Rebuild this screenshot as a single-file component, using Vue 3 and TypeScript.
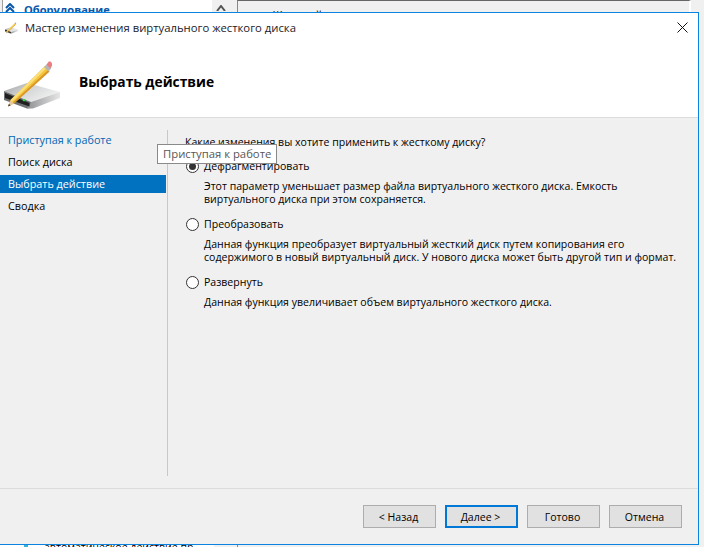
<script setup lang="ts">
interface Option {
  label: string;
  lines: string[];
  selected: boolean;
}

const steps: string[] = ['Приступая к работе', 'Поиск диска', 'Выбрать действие', 'Сводка'];
const activeStep = 2;

const options: Option[] = [
  {
    label: 'Дефрагментировать',
    lines: [
      'Этот параметр уменьшает размер файла виртуального жесткого диска. Емкость',
      'виртуального диска при этом сохраняется.',
    ],
    selected: true,
  },
  {
    label: 'Преобразовать',
    lines: [
      'Данная функция преобразует виртуальный жесткий диск путем копирования его',
      'содержимого в новый виртуальный диск. У нового диска может быть другой тип и формат.',
    ],
    selected: false,
  },
  {
    label: 'Развернуть',
    lines: ['Данная функция увеличивает объем виртуального жесткого диска.'],
    selected: false,
  },
];

const buttons: { label: string; primary: boolean }[] = [
  { label: '< Назад', primary: false },
  { label: 'Далее >', primary: true },
  { label: 'Готово', primary: false },
  { label: 'Отмена', primary: false },
];
</script>

<template>
  <div class="screen">
    <svg class="defs" width="0" height="0" aria-hidden="true">
      <defs>
        <linearGradient id="topFace" x1="0" y1="0" x2="1" y2="0.6">
          <stop offset="0" stop-color="#9b9d9f" />
          <stop offset="0.5" stop-color="#d6d7d8" />
          <stop offset="1" stop-color="#f2f2f2" />
        </linearGradient>
        <linearGradient id="sideFace" x1="0" y1="0" x2="1" y2="0">
          <stop offset="0" stop-color="#8f9091" />
          <stop offset="0.5" stop-color="#bcbdbe" />
          <stop offset="1" stop-color="#e6e6e6" />
        </linearGradient>
        <symbol id="diskPencil" viewBox="0 0 64 56">
          <polygon points="4,36 27,28 60,37 31,47" fill="url(#topFace)" />
          <polygon points="4,36 31,47 31,53 27,53.5 4,45" fill="#6f7071" />
          <polygon points="31,47 60,37 60,43 33,53.5 27,53.5" fill="url(#sideFace)" />
          <polygon points="5,38 29.5,48 29.5,51.5 5,43" fill="#1f1f1f" />
          <rect x="22.8" y="44" width="2.4" height="2.2" fill="#35d04a" />
          <polygon points="8,51.5 10.5,45 45,11 49.5,16.5 14,48.5" fill="#f5c33b" />
          <polygon points="10.5,45 45,11 46.8,13 12,47" fill="#fbdf78" />
          <polygon points="14,48.5 49.5,16.5 48.2,15 12.8,47.5" fill="#d9962a" />
          <polygon points="8,51.5 10,45.8 14,48.5" fill="#e9c9a0" />
          <polygon points="8,51.5 8.9,49 10.8,50.3" fill="#333333" />
          <polygon points="44,12 47.5,8.5 51.5,13 48.5,16.5" fill="#b6b6b6" />
          <polygon points="46.6,9.5 48.8,6.5 50.5,6.5 52,8.2 52,11 50,13.2" fill="#ec7d80" />
        </symbol>
      </defs>
    </svg>

    <div class="backdrop">
      <div class="strip-top">
        <div class="tree-head">
          <svg class="chevrons" viewBox="0 0 10 10" width="10" height="10">
            <path d="M1 5 5 1l4 4M1 9l4-4 4 4" fill="none" stroke="#0a56a8" stroke-width="2" />
          </svg>
          <span class="tree-title">Оборудование</span>
          <span class="tree-scroll">
            <svg viewBox="0 0 10 6" width="10" height="6"><path d="M1 6 5 1l4 5" fill="none" stroke="#555" stroke-width="2" /></svg>
          </span>
        </div>
        <div class="detail-head"><span class="detail-title">Жесткий</span></div>
      </div>
      <div class="strip-bottom">
        <div class="tree-foot">
          <span class="foot-icon"></span>
          <span class="foot-text">автоматическое действие пр</span>
          <span class="foot-scroll"></span>
        </div>
        <span class="foot-edge"></span>
      </div>
    </div>

    <section class="dialog">
      <header class="titlebar">
        <svg class="title-icon" width="15" height="13"><use href="#diskPencil" /></svg>
        <span class="title-text">Мастер изменения виртуального жесткого диска</span>
        <svg class="close" viewBox="0 0 11 11" width="11" height="11">
          <path d="M.5.5l10 10M10.5.5l-10 10" fill="none" stroke="#111" stroke-width="1" />
        </svg>
      </header>

      <div class="banner">
        <svg class="banner-icon" width="64" height="56"><use href="#diskPencil" /></svg>
        <h1 class="banner-title">Выбрать действие</h1>
      </div>

      <div class="body">
        <nav class="steps">
          <div
            v-for="(step, i) in steps"
            :key="step"
            class="step"
            :class="{ first: i === 0, active: i === activeStep }"
          >{{ step }}</div>
        </nav>
        <main class="content">
          <p class="question">Какие изменения вы хотите применить к жесткому диску?</p>
          <div v-for="opt in options" :key="opt.label" class="option">
            <label class="radio-row">
              <span class="radio" :class="{ on: opt.selected }"></span>
              <span>{{ opt.label }}</span>
            </label>
            <div class="desc">
              <div v-for="line in opt.lines" :key="line">{{ line }}</div>
            </div>
          </div>
        </main>
      </div>

      <footer class="footer">
        <button
          v-for="b in buttons"
          :key="b.label"
          class="btn"
          :class="{ primary: b.primary }"
          type="button"
        >{{ b.label }}</button>
      </footer>

      <div class="tooltip">Приступая к работе</div>
    </section>
  </div>
</template>

<style>
html,
body {
  margin: 0;
  padding: 0;
}
</style>

<style scoped>
.screen {
  position: relative;
  width: 704px;
  height: 547px;
  overflow: hidden;
  background: #f0f0f0;
  font-family: "Open Sans", "Noto Sans", sans-serif;
  font-size: 10.55px;
  color: #000;
}
.defs {
  position: absolute;
}
.backdrop {
  position: absolute;
  inset: 0;
  display: flex;
  flex-direction: column;
  justify-content: space-between;
}
.strip-top {
  display: flex;
  height: 12px;
  overflow: hidden;
}
.tree-head {
  display: flex;
  width: 227px;
  margin-left: 2px;
  background: #fff;
  border-left: 1px solid #a0a0a0;
  box-sizing: border-box;
}
.chevrons {
  margin: 3px 0 0 2px;
}
.tree-title {
  margin-left: 9px;
  font-weight: 700;
  font-size: 11.1px;
  line-height: 20px;
  color: #0a56a8;
}
.tree-scroll {
  margin-left: auto;
  width: 17px;
  height: 12px;
  background: #f0f0f0;
  text-align: center;
  line-height: 14px;
}
.detail-head {
  width: 454px;
  margin-left: 8px;
  box-sizing: border-box;
  border-top: 1px solid #666;
  border-left: 1px solid #888;
  border-right: 2px solid #fff;
  background: #f0f0f0;
  padding-left: 35px;
}
.detail-title {
  display: block;
  font-size: 11px;
  line-height: 28px;
  letter-spacing: 0.6px;
  color: #111;
}
.strip-bottom {
  display: flex;
  height: 2px;
  overflow: hidden;
  background: #f0f0f0;
}
.tree-foot {
  display: flex;
  width: 229px;
  height: 2px;
  background: #fff;
  padding-left: 24px;
  box-sizing: border-box;
}
.foot-icon {
  width: 4px;
  height: 2px;
  background: #35b4d8;
}
.foot-text {
  margin-left: 16px;
  margin-top: -4px;
  font-size: 10.55px;
  line-height: 12px;
  white-space: nowrap;
}
.foot-scroll {
  width: 16px;
  height: 2px;
  margin-left: auto;
  margin-right: -1px;
  background: #f0f0f0;
}
.foot-edge {
  width: 1px;
  height: 2px;
  margin-left: 8px;
  background: #888;
}

.dialog {
  position: absolute;
  left: -1px;
  top: 12px;
  width: 700px;
  height: 533px;
  box-sizing: border-box;
  border: 1px solid #0a84e0;
  background: #f0f0f0;
  display: flex;
  flex-direction: column;
}
.titlebar {
  display: flex;
  align-items: center;
  height: 28px;
  flex: none;
  background: #fff;
  padding: 0 10px 0 4px;
}
.title-icon {
  flex: none;
}
.title-text {
  margin-left: 6px;
  margin-top: 1px;
  font-size: 11.3px;
  color: #1a1a2a;
}
.close {
  margin-left: auto;
}
.banner {
  display: flex;
  align-items: center;
  height: 76px;
  flex: none;
  background: #fff;
  border-bottom: 1px solid #dcdcdc;
}
.banner-icon {
  flex: none;
  margin-top: 8px;
}
.banner-title {
  margin: 4px 0 0 15px;
  font-size: 13.8px;
  font-weight: 700;
  color: #000;
}
.body {
  flex: 1;
  display: flex;
  min-height: 0;
  padding: 12px 0;
  border-bottom: 1px solid #dcdcdc;
}
.steps {
  width: 168px;
  flex: none;
  border-right: 1px solid #c8c8c8;
  padding-top: 1px;
  box-sizing: border-box;
}
.step {
  height: 18px;
  line-height: 18px;
  margin: 0 1px 4px 0;
  padding-left: 8px;
  font-size: 10.8px;
}
.step.first {
  color: #0066b4;
}
.step.active {
  background: #0072c0;
  color: #fff;
}
.content {
  flex: 1;
  padding: 3px 0 0 17px;
}
.question {
  margin: 0 0 6px;
  line-height: 18px;
}
.option {
  margin-bottom: 9px;
}
.radio-row {
  display: flex;
  align-items: center;
  gap: 5px;
  height: 18px;
  margin-left: 1px;
}
.radio {
  width: 13px;
  height: 13px;
  box-sizing: border-box;
  border: 1px solid #333;
  border-radius: 50%;
  background: #fff;
  display: flex;
  align-items: center;
  justify-content: center;
}
.radio.on::after {
  content: "";
  width: 7px;
  height: 7px;
  border-radius: 50%;
  background: #333;
}
.desc {
  margin: 5px 0 0 19px;
  line-height: 13px;
  white-space: nowrap;
}
.footer {
  display: flex;
  justify-content: flex-end;
  align-items: flex-start;
  gap: 9px;
  height: 55px;
  flex: none;
  padding: 16px 16px 0 0;
  box-sizing: border-box;
}
.btn {
  width: 73px;
  height: 23px;
  padding: 0 2px 0 0;
  box-sizing: border-box;
  border: 1px solid #adadad;
  background: #e1e1e1;
  font: inherit;
  color: #000;
}
.btn.primary {
  border: 2px solid #0078d7;
}
.tooltip {
  position: absolute;
  left: 157px;
  top: 131px;
  width: 120px;
  height: 20px;
  box-sizing: border-box;
  border: 1px solid #8a8a8a;
  background: #fff;
  color: #575757;
  padding-left: 5px;
  line-height: 18px;
  font-size: 11.3px;
  white-space: nowrap;
}
</style>
